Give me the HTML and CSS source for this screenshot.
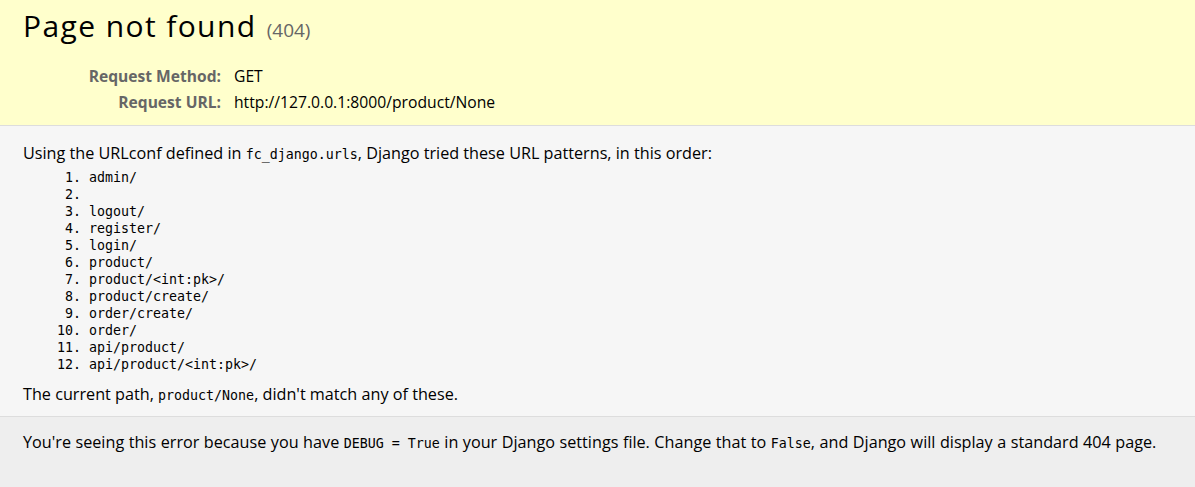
FILE: index.html
```html
<!DOCTYPE html>
<html lang="en">
<head>
<meta charset="utf-8">
<title>Page not found at /product/None</title>
<link rel="stylesheet" href="styles.css">
</head>
<body>
<div class="summary">
  <h1 class="title">Page not found <span class="code">(404)</span></h1>
  <table class="meta">
    <tr><th>Request Method:</th><td>GET</td></tr>
    <tr><th>Request URL:</th><td>http://127.0.0.1:8000/product/None</td></tr>
  </table>
</div>
<div class="info">
  <p class="line">Using the URLconf defined in <code class="mono">fc_django.urls</code>, Django tried these URL patterns, in this order:</p>
  <ol class="patterns">
    <li>admin/</li>
    <li></li>
    <li>logout/</li>
    <li>register/</li>
    <li>login/</li>
    <li>product/</li>
    <li>product/&lt;int:pk&gt;/</li>
    <li>product/create/</li>
    <li>order/create/</li>
    <li>order/</li>
    <li>api/product/</li>
    <li>api/product/&lt;int:pk&gt;/</li>
  </ol>
  <p class="line">The current path, <code class="mono">product/None</code>, didn't match any of these.</p>
</div>
<div class="explanation">
  <p class="line wide">You're seeing this error because you have <code class="mono">DEBUG = True</code> in your Django settings file. Change that to <code class="mono">False</code>, and Django will display a standard 404 page.</p>
</div>
</body>
</html>
```

FILE: styles.css
```css
html, body { margin: 0; padding: 0; }
body {
  background: #eee;
  color: #000;
  font-family: "Open Sans", "Noto Sans", sans-serif;
  font-size: 16.2px;
  line-height: 20px;
}
.summary {
  background: #ffc;
  border-bottom: 1px solid #ddd;
  padding: 8px 23px 10px;
}
.title {
  margin: 0 0 15px;
  font-size: 30px;
  font-weight: normal;
  line-height: 36px;
  letter-spacing: 1.4px;
}
.code { font-size: 19px; color: #666; letter-spacing: 0; margin-left: 1px; }
.meta { border-collapse: collapse; border: none; }
.meta th, .meta td {
  vertical-align: top;
  padding: 3px 3px;
  line-height: 20px;
  font-size: 15.7px;
}
.meta td { padding-left: 5px; }
.meta th {
  width: 195px;
  text-align: right;
  color: #666;
  padding-right: 8px;
  font-weight: bold;
  font-size: 15.6px;
}
.info {
  background: #f6f6f6;
  border-bottom: 1px solid #ddd;
  padding: 17px 23px 10px;
}
.line { margin: 0; }
.wide { word-spacing: 0.3px; }
.mono { font-family: "DejaVu Sans Mono", monospace; font-size: 13.3px; word-spacing: 0; }
.patterns {
  margin: 4px 0 11px 66px;
  padding: 0;
  font-family: "DejaVu Sans Mono", monospace;
  font-size: 13.3px;
  line-height: 17px;
}
.explanation { padding: 15px 23px 14px; }
```
